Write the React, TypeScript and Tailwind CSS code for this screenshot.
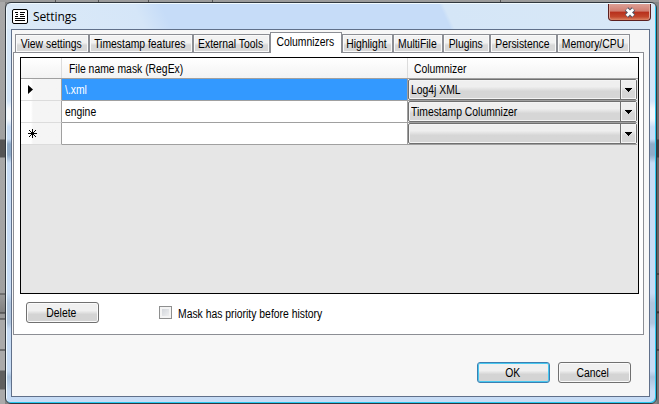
import React from "react";

const tabs: { label: string; cls: string }[] = [
  { label: "View settings", cls: "w-[74px]" },
  { label: "Timestamp features", cls: "w-[104px]" },
  { label: "External Tools", cls: "w-[77px]" },
  { label: "Columnizers", cls: "w-[72px]" },
  { label: "Highlight", cls: "w-[51px]" },
  { label: "MultiFile", cls: "w-[50px]" },
  { label: "Plugins", cls: "w-[47px]" },
  { label: "Persistence", cls: "w-[67px]" },
  { label: "Memory/CPU", cls: "w-[73px]" },
];

// Condensed interface text, squeezed from the left edge or around its centre.
function Label({ text, centered }: { text: string; centered?: boolean }) {
  return <span className={"inline-block shrink-0 " + (centered ? "origin-center scale-x-[.865]" : "origin-left scale-x-[.865]")}>{text}</span>;
}

function Tab({ tab, selected }: { tab: (typeof tabs)[number]; selected: boolean }) {
  return (
    <div
      className={
        selected
          ? "z-10 -mb-px flex h-[21px] shrink-0 items-center justify-center border border-b-0 border-[#8c8e94] bg-white pr-px pb-[2px] " + tab.cls
          : "flex h-[18px] shrink-0 items-center justify-center border border-b-0 border-[#8c8e94] bg-linear-to-b from-[#f2f2f2] from-45% to-[#d8d8d8] to-60% pt-px pr-[2px] shadow-[inset_0_0_0_1px_#fafafa] " + tab.cls
      }
    >
      <Label text={tab.label} centered />
    </div>
  );
}

function Combo({ text }: { text: string }) {
  return (
    <div className="flex h-[21px] w-[229px] rounded-[2px] border border-[#707070] bg-linear-to-b from-[#efefef] from-35% to-[#d6d6d6] to-60% shadow-[inset_0_0_0_1px_#f4f4f4]">
      <div className="flex flex-1 items-center pl-[2px]"><Label text={text} /></div>
      <div className="flex w-[16px] items-center justify-center border-l border-[#707070] shadow-[inset_0_0_0_1px_#f4f4f4]">
        <svg width="7" height="4" viewBox="0 0 7 4" shapeRendering="crispEdges"><path d="M0 0H7L3.5 4Z" /></svg>
      </div>
    </div>
  );
}

function Button({ label, primary }: { label: string; primary?: boolean }) {
  return (
    <div
      className={
        "flex h-[21px] w-[73px] items-center justify-center rounded-[3px] border bg-linear-to-b from-[#f0f0f0] from-40% to-[#d4d4d4] to-60% " +
        (primary ? "border-[#3c7fb1] pr-[2px] shadow-[inset_0_0_0_1px_#48c8f0]" : "border-[#707070] pr-[3px] shadow-[inset_0_0_0_1px_#fafafa]")
      }
    >
      <Label text={label} centered />
    </div>
  );
}

const rows = [
  { mask: "\\.xml", columnizer: "Log4j XML", mark: "current" },
  { mask: "engine", columnizer: "Timestamp Columnizer", mark: "" },
  { mask: "", columnizer: "", mark: "new" },
];

export default function App() {
  return (
    <div className="flex h-[404px] w-[659px] flex-col overflow-hidden bg-[#858585] font-['Liberation_Sans',sans-serif] text-[12px] leading-[14px] whitespace-nowrap text-black">
      <div className="flex h-[2px] shrink-0 bg-[#9b9b9b]">
        <div className="w-[56px] border-r border-[#555]" />
        <div className="w-[43px] border-r border-[#555]" />
        <div className="w-[50px] border-r border-[#555]" />
        <div className="w-[64px] border-r border-[#555]" />
        <div className="w-[288px] border-r border-[#555]" />
      </div>
      <div className="flex">
        <div className="h-[402px] w-[5px] shrink-0 bg-[linear-gradient(#a9a9a9_0,#a0a0a0_137px,#555_138px,#555_155px,#a8a8a8_156px,#a0a0a0_291px,#444_292px,#999_293px,#808080_310px,#333_311px,#999_312px,#999_316px,#333_317px,#aaa_318px,#aaa_347px,#333_348px,#aaa_349px,#aaa_368px,#606060_369px,#606060_387px,#aaa_388px)]" />
        <div className="flex h-[402px] w-[652px] shrink-0 flex-col overflow-hidden rounded-[6px] border border-[#30373e] bg-[linear-gradient(#d9e9f8_0,#d3e5f8_98px,#f4f8fc_106px,#f4f8fc_116px,#c7dcf5_124px,#c7dcf5_136px,#8fabc8_141px,#8fabc8_152px,#c7dcf5_160px,#c7dcf5_290px,#afc5de_300px,#afc5de_320px,#c7dcf5_326px,#c7dcf5_368px,#a9c2dd_374px,#c7dcf5_388px)] shadow-[inset_-1px_-1px_0_#28c8f0,inset_1px_1px_0_#f0faff]">
          <div className="mt-px mr-px ml-px flex h-[25px] shrink-0 items-start bg-[linear-gradient(65deg,#dceaf7_0,#d5e6f8_125px,#c6dcf8_150px,#c6dcf8_402px,#d5e6f7_406px,#d8e8f7_100%)] pl-[5px]">
            <svg className="mt-[5px]" width="16" height="15" viewBox="0 0 16 15">
              <rect x=".5" y=".5" width="15" height="14" rx="1.5" fill="#fff" stroke="#000" />
              <path d="M3 3.5h3M8 3.5h5M4 5.5h2M8 5.5h4M3 7.5h3M8 7.5h5M3 9.5h10M3 11.5h10" stroke="#000" />
            </svg>
            <span className="mt-[6px] ml-[5px] font-['Open_Sans',sans-serif] tracking-[-0.1px]">Settings</span>
            <div className="mr-[4px] ml-auto flex h-[17px] w-[43px] items-center justify-center rounded-b-[4px] border border-t-0 border-[#5c2020] bg-[linear-gradient(#dda096,#d07d70_45%,#b72f1c_50%,#c2472c_80%,#dc8465)] shadow-[inset_1px_0_0_#e0a598,inset_-1px_0_0_#e0a598]">
              <svg width="14" height="11" viewBox="0 0 14 11"><path d="M3.5 2L10.5 9M10.5 2L3.5 9" stroke="#535666" strokeWidth="4.8" /><path d="M3.7 2.2L10.3 8.8M10.3 2.2L3.7 8.8" stroke="#fff" strokeWidth="2.8" /></svg>
            </div>
          </div>
          <div className="ml-[5px] flex h-[368px] w-[639px] shrink-0 flex-col border border-[#60708a] bg-[#f7f7f7] pl-px">
            <div className="flex h-[22px] shrink-0 items-end pl-[2px]">
              {tabs.map((t) => <Tab key={t.label} tab={t} selected={t.label === "Columnizers"} />)}
            </div>
            <div className="h-[283px] w-[631px] shrink-0 border border-[#8c8e94] bg-white pt-[4px] pl-[6px]">
              <div className="flex h-[237px] w-[619px] flex-col border border-black bg-[#e6e6e6]">
                <div className="flex h-[21px] shrink-0 border-b border-[#a0a0a0] bg-linear-to-b from-white to-[#f3f3f3]">
                  <div className="w-[41px] border-r border-[#dcdcdc]" />
                  <div className="flex w-[346px] items-center border-r border-[#dcdcdc] pt-px pl-[7px]"><Label text="File name mask (RegEx)" /></div>
                  <div className="flex items-center pt-px pl-[6px]"><Label text="Columnizer" /></div>
                </div>
                {rows.map((r) => (
                  <div key={r.mark} className="flex h-[22px] shrink-0">
                    <div className="flex w-[41px] items-center border-r border-b border-r-[#a0a0a0] border-b-[#dcdcdc] bg-linear-to-r from-white from-25% to-[#f5f5f5] to-30% pl-[7px]">
                      {r.mark === "current" && <svg width="6" height="9" viewBox="0 0 6 9"><path d="M0 0L5 4.5L0 9Z" /></svg>}
                      {r.mark === "new" && <svg width="9" height="9" viewBox="0 0 9 9"><path d="M4.5 0V9M0 4.5H9M1 1L8 8M8 1L1 8" stroke="#000" /></svg>}
                    </div>
                    <div className={"flex w-[346px] items-center border-r border-b border-[#a0a0a0] pl-[3px] " + (r.mark === "current" ? "bg-[#3399ff] text-white" : "bg-white")}><Label text={r.mask} /></div>
                    <div className="h-[22px] w-[229px] border-b border-[#a0a0a0] bg-white"><Combo text={r.columnizer} /></div>
                  </div>
                ))}
              </div>
              <div className="mt-[8px] flex items-center pl-[6px]">
                <Button label="Delete" />
                <div className="ml-[60px] h-[13px] w-[13px] border border-[#8e8f8f] bg-linear-to-br from-[#cbcfd5] to-[#f6f6f6] shadow-[inset_0_0_0_2px_#f4f4f4]" />
                <span className="mt-[2px] ml-[6px]"><Label text="Mask has priority before history" /></span>
              </div>
            </div>
            <div className="mt-[27px] flex gap-[8px] pl-[464px]">
              <Button label="OK" primary />
              <Button label="Cancel" />
            </div>
          </div>
        </div>
        <div className="h-[402px] w-[2px] shrink-0 bg-[linear-gradient(#888_0,#6c6c6c_137px,#3c3c3c_138px,#3c3c3c_155px,#666_156px,#666_271px,#222_272px,#666_273px,#666_309px,#222_310px,#666_312px,#666_347px,#222_348px,#777_349px)]" />
      </div>
    </div>
  );
}
